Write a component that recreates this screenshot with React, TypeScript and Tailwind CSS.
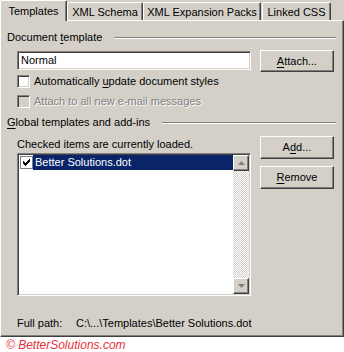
import type { ReactNode } from "react";

const raised = "border border-t-white border-l-white border-r-[#404040] border-b-[#404040] shadow-[inset_-1px_-1px_0_#808080]";
const sunken = "border border-t-[#808080] border-l-[#808080] border-r-white border-b-white shadow-[inset_1px_1px_0_#404040,inset_-1px_-1px_0_#d4d0c8]";

function U({ children }: { children: ReactNode }) {
  return <span className="underline underline-offset-[2px]">{children}</span>;
}

function GroupHeader({ children, className = "" }: { children: ReactNode; className?: string }) {
  return (
    <div className={`flex h-[13px] items-center leading-[13px] ${className}`}>
      <span>{children}</span>
      <div className="ml-[12px] h-[2px] flex-1 border-t border-t-[#808080] border-b border-b-white" />
    </div>
  );
}

function Button({ children, className = "" }: { children: ReactNode; className?: string }) {
  return (
    <div className={`flex h-[22px] w-[74px] items-center justify-center bg-[#d4d0c8] ${raised} ${className}`}>
      {children}
    </div>
  );
}

function Check() {
  return (
    <svg width="7" height="7" viewBox="0 0 7 7" className="block">
      <path d="M0 2h1v1h1v1h1v-1h1v-1h1v-1h1v-1h1v3h-1v1h-1v1h-1v1h-1v1h-1v-1h-1v-1h-1z" fill="#000" />
    </svg>
  );
}

function Arrow({ up }: { up?: boolean }) {
  return (
    <div className={`flex h-[16px] w-[16px] items-center justify-center bg-[#d4d0c8] ${raised}`}>
      <svg width="7" height="4" viewBox="0 0 7 4" className={up ? "" : "rotate-180"}>
        <path d="M3.5 0L7 4H0z" fill="#808080" />
      </svg>
    </div>
  );
}

export default function App() {
  const tab = "flex items-center justify-center bg-[#d4d0c8] border-t border-l border-t-white border-l-white border-r border-r-[#404040] shadow-[inset_-1px_0_0_#808080] rounded-t-[2px]";

  return (
    <div className="h-[352px] w-[344px] overflow-hidden bg-white text-[11px] text-black [font-family:'Liberation_Sans',Arial,sans-serif]">
      <div className="flex h-[20px] items-end bg-[#d4d0c8]">
        <div className={`${tab} relative z-10 -mb-[1px] h-[21px] w-[67px]`}>Templates</div>
        <div className={`${tab} h-[18px] w-[76px] pt-[1px]`}>XML Schema</div>
        <div className={`${tab} h-[18px] w-[118px] pt-[1px]`}>XML Expansion Packs</div>
        <div className={`${tab} ml-[1px] h-[18px] w-[69px] pt-[1px]`}>Linked CSS</div>
      </div>

      <div className="h-[317px] border border-t-white border-l-white border-r-[#404040] border-b-[#404040] bg-[#d4d0c8] pl-[6px] pr-[7px] shadow-[inset_-1px_-1px_0_#808080]">
        <GroupHeader className="mt-[10px]">
          Document <U>t</U>emplate
        </GroupHeader>

        <div className="mt-[6px] flex items-start">
          <div className={`ml-[10px] mt-[1px] flex h-[19px] w-[234px] items-center bg-white pl-[3px] ${sunken}`}>Normal</div>
          <Button className="ml-[9px]">
            <span><U>A</U>ttach...</span>
          </Button>
        </div>

        <div className="ml-[10px] mt-[3px] flex h-[13px] items-center">
          <div className={`h-[13px] w-[13px] bg-white ${sunken}`} />
          <span className="ml-[4px]">Automatically <U>u</U>pdate document styles</span>
        </div>

        <div className="ml-[10px] mt-[7px] flex h-[13px] items-center">
          <div className={`h-[13px] w-[13px] bg-[#d4d0c8] ${sunken}`} />
          <span className="ml-[4px] text-[#808080] [text-shadow:1px_1px_0_#fff]">Attach to all new e-mail messages</span>
        </div>

        <GroupHeader className="mt-[8px]">
          <U>G</U>lobal templates and add-ins
        </GroupHeader>

        <div className="mt-[7px] flex items-start">
          <div className="ml-[10px] w-[234px]">
            <div className="mt-[2px] h-[13px] leading-[13px]">Checked items are currently loaded.</div>
            <div className={`mt-[2px] flex h-[143px] bg-white ${sunken} p-[1px]`}>
              <div className="flex-1">
                <div className="flex h-[15px] items-center">
                  <div className="ml-[1px] flex h-[13px] w-[13px] items-center justify-center border border-[#808080] bg-white">
                    <Check />
                  </div>
                  <div className="flex h-[15px] flex-1 items-center bg-[#0a246a] pl-[2px] text-white">Better Solutions.dot</div>
                </div>
              </div>
              <div className="flex w-[16px] flex-col [background-image:repeating-conic-gradient(#d4d0c8_0%_25%,#ffffff_0%_50%)] [background-size:2px_2px]">
                <Arrow up />
                <div className="flex-1" />
                <Arrow />
              </div>
            </div>
          </div>
          <div className="ml-[9px]">
            <Button className="h-[23px]">
              <span>A<U>d</U>d...</span>
            </Button>
            <Button className="mt-[7px] h-[23px]">
              <span><U>R</U>emove</span>
            </Button>
          </div>
        </div>

        <div className="ml-[10px] mt-[21px] flex h-[13px] items-center">
          <span className="w-[59px]">Full path:</span>
          <span>C:\...\Templates\Better Solutions.dot</span>
        </div>
      </div>

      <div className="pl-[6px] pt-[2px] text-[12px] italic leading-[13px] text-[#e8303a] [font-family:'Liberation_Sans',Arial,sans-serif]">
        © BetterSolutions.com
      </div>
    </div>
  );
}
